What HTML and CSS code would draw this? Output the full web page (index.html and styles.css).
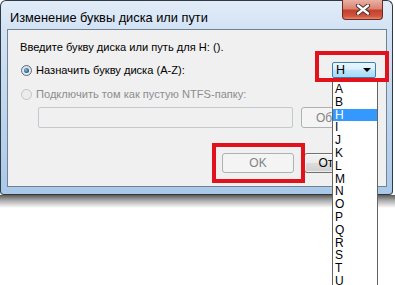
FILE: index.html
```html
<!DOCTYPE html>
<html lang="ru">
<head>
<meta charset="utf-8">
<link rel="stylesheet" href="styles.css">
</head>
<body>
<div class="window">
  <div class="titlebar">
    <span class="title">Изменение буквы диска или пути</span>
    <div class="close">
      <svg width="16" height="11" viewBox="0 0 16 11"><path d="M3 1.5 L13 9.5 M13 1.5 L3 9.5" stroke="#3b2a28" stroke-width="4.2" stroke-linecap="round"/><path d="M3 1.5 L13 9.5 M13 1.5 L3 9.5" stroke="#fff" stroke-width="2.4" stroke-linecap="round"/></svg>
    </div>
  </div>
  <div class="client">
    <div class="prompt">Введите букву диска или путь для H: ().</div>
    <div class="row row1">
      <span class="radio checked"></span>
      <span class="label">Назначить букву диска (A-Z):</span>
      <div class="combo"><span>H</span><span class="arrow"></span></div>
    </div>
    <div class="row row2">
      <span class="radio disabled"></span>
      <span class="label dis">Подключить том как пустую NTFS-папку:</span>
    </div>
    <div class="row row3">
      <div class="textbox"></div>
      <div class="btn dis">Обзор...</div>
    </div>
    <div class="row row4">
      <div class="btn dis">OK</div>
      <div class="btn">Отмена</div>
    </div>
  </div>
</div>
<div class="shadow"></div>

<ul class="list">
  <li>A</li><li>B</li><li class="sel">H</li><li>I</li><li>J</li><li>K</li><li>L</li><li>M</li><li>N</li><li>O</li><li>P</li><li>Q</li><li>R</li><li>S</li><li>T</li><li>U</li>
</ul>
<div class="mark mark1"></div>
<div class="mark mark2"></div>
</body>
</html>
```
FILE: styles.css
```css
html, body { margin: 0; padding: 0; background: #fff; }
body { width: 395px; height: 285px; overflow: hidden; position: relative; font-family: "Liberation Sans", Arial, sans-serif; }

.window {
  width: 393px; height: 195px; box-sizing: border-box;
  border: 1px solid #2e3a46; border-bottom-color: #363636;
  border-radius: 6px 6px 4px 4px;
  background: linear-gradient(#e2ecf8, #d3e3f4 28px, #bcd4ed 120px, #a9c8e8);
  display: flex; flex-direction: column;
}
.titlebar { height: 28px; display: flex; align-items: flex-start; position: relative; }
.title { font-size: 12.8px; color: #000; margin: 9px 0 0 9px; line-height: 15px; }
.close {
  position: absolute; left: 341px; top: -1px; width: 41px; height: 20px; box-sizing: border-box;
  border: 1px solid #6b2a20; border-top: none; border-radius: 0 0 4px 4px;
  background: linear-gradient(#eab1a5, #d98474 45%, #c4412c 55%, #d1553f 85%, #e48a6c);
  display: flex; align-items: center; justify-content: center;
}
.client {
  margin: 0 5px 0 6px; height: 158px; box-sizing: border-box;
  border: 1px solid #6f8296;
  background: #f0f0f0;
  padding: 10px 10px 0 12px;
  display: flex; flex-direction: column;
  font-size: 11.1px; color: #000;
}
.prompt { line-height: 15px; height: 15px; }
.row { display: flex; align-items: center; }
.row1 { margin-top: 7px; height: 16px; }
.row2 { margin-top: 8px; height: 16px; }
.row3 { margin-top: 5px; height: 21px; }
.row4 { margin-top: 25px; height: 20px; justify-content: flex-end; gap: 10px; }
.label { line-height: 15px; margin-left: 4px; }
.label.dis { color: #8d8d8d; }

.radio { width: 11px; height: 11px; border-radius: 50%; margin-left: 1px; box-sizing: border-box; position: relative; }
.radio.checked { border: 1px solid #5b6b7c; background: radial-gradient(circle at 50% 60%, #f4f4f4, #d5d9de); }
.radio.checked::after { content: ""; position: absolute; left: 2px; top: 2px; width: 5px; height: 5px; border-radius: 50%; background: radial-gradient(circle at 40% 40%, #7fc1e8, #17598a 70%); }
.radio.disabled { border: 1px solid #c0c4c8; background: #ececec; }

.combo {
  margin-left: auto; width: 44px; height: 16px; box-sizing: border-box;
  border: 1px solid #3c7fb1; border-radius: 2px;
  background: linear-gradient(#eaf6fd, #d9f0fc 45%, #bee6fd 50%, #a7d9f5);
  display: flex; align-items: center; padding: 0 4px 0 3px;
  font-size: 12.5px;
}
.combo .arrow { margin-left: auto; width: 0; height: 0; border-left: 4px solid transparent; border-right: 4px solid transparent; border-top: 4px solid #000; }

.textbox { margin-left: 18px; width: 257px; height: 21px; box-sizing: border-box; border: 1px solid #c5c9cd; border-radius: 2px; background: #f0f0f0; }
.row3 .btn { margin-left: 8px; width: 76px; height: 21px; }
.btn {
  width: 72px; height: 20px; box-sizing: border-box;
  border: 1px solid #707070; border-radius: 3px;
  background: linear-gradient(#f2f2f2, #ebebeb 50%, #dddddd 50%, #cfcfcf);
  display: flex; align-items: center; justify-content: center;
  font-size: 12px; color: #000; box-shadow: inset 0 0 0 1px rgba(255,255,255,0.6);
}
.btn.dis { border-color: #adb2b5; background: #f4f4f4; color: #838383; box-shadow: none; }

.shadow { height: 13px; background: linear-gradient(#5a5a5a, #a8a8a8 40%, #fff); }

.list {
  position: absolute; left: 332px; top: 81px; width: 46px; height: 204px; margin: 0; padding: 1px 0 0 0;
  box-sizing: border-box; list-style: none; background: #fff; border: 1px solid #646464; border-bottom: none;
  font-family: "Liberation Sans", Arial, sans-serif; font-size: 12px; overflow: hidden;
}
.list li { height: 12.8px; line-height: 12.8px; padding-left: 2px; }
.list li.sel { background: #3399ff; color: #fff; }

.mark { position: absolute; border: 4px solid #e2121d; box-sizing: border-box; }
.mark1 { left: 315px; top: 51px; width: 74px; height: 31px; }
.mark2 { left: 212px; top: 143px; width: 93px; height: 40px; }
```
